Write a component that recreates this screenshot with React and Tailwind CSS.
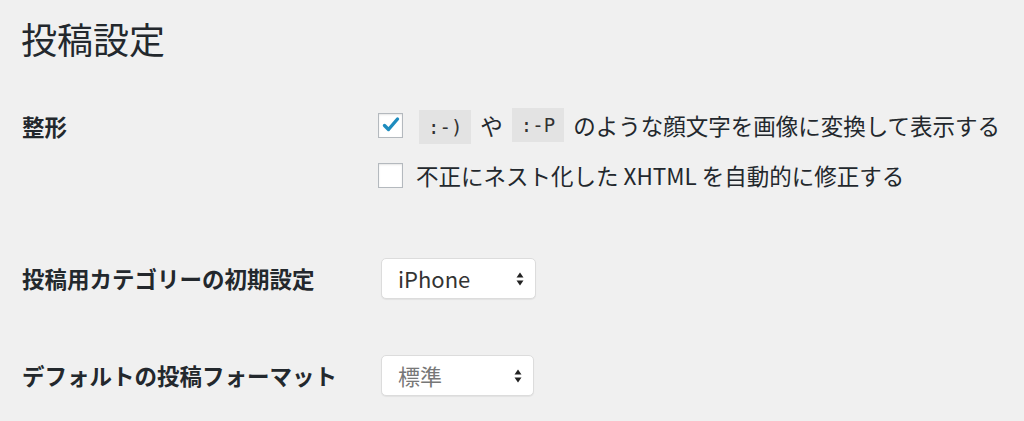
import React from 'react';

const font = { fontFamily: '"Noto Sans CJK JP", "Noto Sans", sans-serif' };

const Checkbox = ({ checked }) => (
  <span className="flex h-[25px] w-[25px] shrink-0 items-center justify-center border border-[#b4b9be] bg-white shadow-[inset_0_1px_2px_rgba(0,0,0,0.1)]">
    {checked && (
      <svg width="20" height="20" viewBox="0 0 20 20">
        <path d="M3.5 10.5 L7.5 14.5 L16.5 4" fill="none" stroke="#1e8cbe" strokeWidth="3.4" strokeLinecap="round" strokeLinejoin="round" />
      </svg>
    )}
  </span>
);

const Code = ({ children }) => (
  <span className="inline-flex h-[34px] items-center bg-[#e3e3e3] px-[9px] font-['DejaVu_Sans_Mono',monospace] text-[19px] text-[#333]">
    {children}
  </span>
);

const Select = ({ value, muted, width }) => (
  <div className={`flex h-[41px] ${width} items-center justify-between rounded-[5px] border border-[#dcdcdc] bg-white pl-[16px] pr-[11px] shadow-[0_1px_1px_rgba(0,0,0,0.06)]`}>
    <span className={`text-[22px] ${muted ? 'text-[#777]' : 'text-[#333]'}`}>{value}</span>
    <svg width="8" height="16" viewBox="0 0 8 16">
      <path d="M4 1.5 L7.5 6.5 H0.5 Z" fill="#222" />
      <path d="M4 14.5 L7.5 9.5 H0.5 Z" fill="#222" />
    </svg>
  </div>
);

export default function App() {
  return (
    <div className="h-[421px] w-[1024px] overflow-hidden bg-[#f0f0f0] text-[#23282d]" style={font}>
      <h1 className="pl-[21px] pt-[16px] text-[36px] font-normal leading-[44px]">投稿設定</h1>

      <div className="mt-[46px] flex">
        <div className="w-[378px] shrink-0 pl-[22px] pt-[2px] text-[22.5px] font-bold leading-[36px]">整形</div>
        <div className="flex flex-col gap-[13px]">
          <div className="flex items-center text-[22.5px] leading-[36px]">
            <Checkbox checked />
            <span className="ml-[16px]"><Code>:-)</Code></span>
            <span className="mx-[9px]">や</span>
            <Code>:-P</Code>
            <span className="ml-[9px]">のような顔文字を画像に変換して表示する</span>
          </div>
          <div className="flex items-center text-[22.5px] leading-[36px]">
            <Checkbox />
            <span className="ml-[13px]">不正にネスト化した XHTML を自動的に修正する</span>
          </div>
        </div>
      </div>

      <div className="mt-[65px] flex items-center">
        <div className="w-[381px] shrink-0 pl-[22px] text-[22.5px] font-bold">投稿用カテゴリーの初期設定</div>
        <Select value="iPhone" width="w-[155px]" />
      </div>

      <div className="mt-[56px] flex items-center">
        <div className="w-[381px] shrink-0 pl-[22px] text-[22.5px] font-bold">デフォルトの投稿フォーマット</div>
        <Select value="標準" muted width="w-[153px]" />
      </div>
    </div>
  );
}
